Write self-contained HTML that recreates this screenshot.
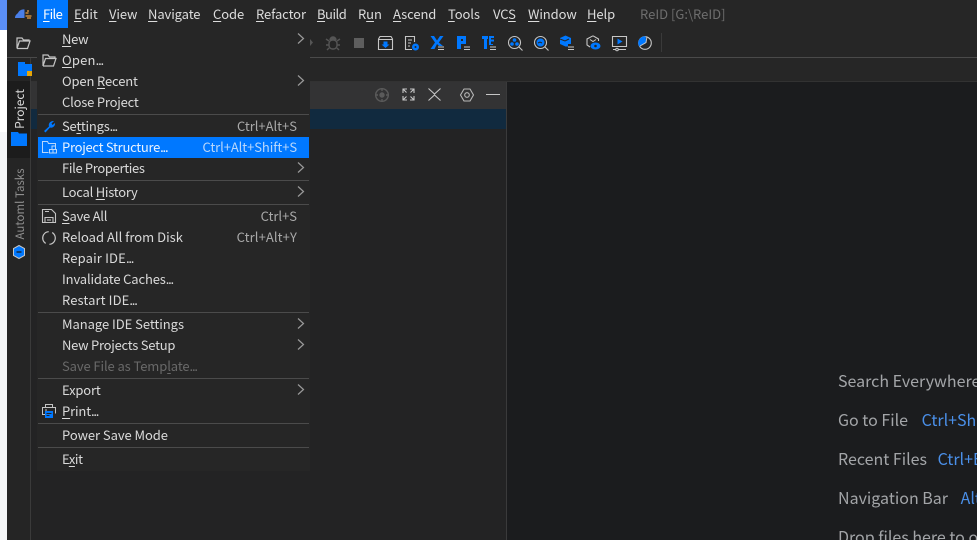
<!DOCTYPE html>
<html><head><meta charset="utf-8">
<style>
html,body{margin:0;padding:0;width:977px;height:540px;overflow:hidden;background:#232324}
body{position:relative;font-family:"Noto Sans CJK SC","Liberation Sans",sans-serif;font-size:13px;color:#d6d6d6}
.a{position:absolute}
.t{position:absolute;white-space:nowrap;line-height:18px;height:18px}
u{text-decoration-thickness:1px;text-underline-offset:2px}
.m{top:5px;color:#dcdcdc;letter-spacing:-.1px}
.i{left:62px;color:#dadada;letter-spacing:0}
.d{letter-spacing:-1.2px}
.s{right:680px;color:#a9a9a9;letter-spacing:-.02px}
.sep{position:absolute;left:38px;width:271px;height:1px;background:#4b4b4b}
.arr{position:absolute;left:296px;width:9px;height:12px}
svg{position:absolute;overflow:visible}
.hw{position:absolute;left:507px;top:360px;width:470px;height:180px;overflow:hidden}
.h{position:absolute;left:331px;white-space:nowrap;font-size:16px;color:#a3a5a8;line-height:22px}
.h b{font-weight:400;color:#4a8fe8}
</style></head><body>
<!-- left strip -->
<div class="a" style="left:0;top:0;width:7px;height:30px;background:#5b8ff7"></div>
<div class="a" style="left:0;top:30px;width:7px;height:102px;background:#fff"></div>
<div class="a" style="left:0;top:132px;width:7px;height:408px;background:#f5f6f8"></div>
<!-- top bars -->
<div class="a" style="left:7px;top:0;width:970px;height:82px;background:#262626"></div>
<div class="a" style="left:7px;top:57px;width:970px;height:1px;background:#4a4a4a"></div>
<div class="a" style="left:7px;top:81px;width:970px;height:1px;background:#323232"></div>
<!-- tool strip -->
<div class="a" style="left:7px;top:58px;width:23px;height:482px;background:#252525"></div>
<div class="a" style="left:7px;top:81px;width:23px;height:77px;background:#1c1c1c"></div>
<div class="a" style="left:30px;top:58px;width:1px;height:482px;background:#3a3a3a"></div>
<!-- project panel -->
<div class="a" style="left:31px;top:82px;width:475px;height:458px;background:#232324"></div>
<div class="a" style="left:31px;top:82px;width:475px;height:27px;background:#333334"></div>
<div class="a" style="left:31px;top:109px;width:475px;height:20px;background:#112a3f"></div>
<div class="a" style="left:506px;top:82px;width:1px;height:458px;background:#3a3a3b"></div>
<div class="a" style="left:507px;top:82px;width:470px;height:458px;background:#1b1c1e"></div>
<!-- logo -->
<svg style="left:15px;top:9px" width="17" height="10" viewBox="0 0 17 10"><path d="M0 9 C0 6 2 5 3 4 C4 1.500 7 0 9.500 .5 V9Z" fill="#4a7fe8"/><path d="M10.500 4h3M10.500 7h6M12 2h2M12 9h4" stroke="#c98a3c" stroke-width="1.500" fill="none"/></svg>
<!-- menu bar -->
<div class="a" style="left:37px;top:0;width:31px;height:28px;background:#0078ff"></div>
<span class="t m" style="left:43px;color:#fff;letter-spacing:-.6px"><u>F</u>ile</span>
<span class="t m" style="left:74px"><u>E</u>dit</span>
<span class="t m" style="left:109px"><u>V</u>iew</span>
<span class="t m" style="left:148px"><u>N</u>avigate</span>
<span class="t m" style="left:213px"><u>C</u>ode</span>
<span class="t m" style="left:256px"><u>R</u>efactor</span>
<span class="t m" style="left:317px;letter-spacing:-.5px"><u>B</u>uild</span>
<span class="t m" style="left:358px">R<u>u</u>n</span>
<span class="t m" style="left:393px"><u>A</u>scend</span>
<span class="t m" style="left:448px"><u>T</u>ools</span>
<span class="t m" style="left:493px">VC<u>S</u></span>
<span class="t m" style="left:528px"><u>W</u>indow</span>
<span class="t m" style="left:587px"><u>H</u>elp</span>
<span class="t" style="left:640px;top:5px;color:#6e6e6e;font-size:13px">ReID [G:\ReID]</span>
<!-- toolbar icons -->
<svg style="left:16px;top:36px" width="15" height="14" viewBox="0 0 15 14" fill="none" stroke="#c4c4c4" stroke-width="1.200"><path d="M1 12.500V2h5l1.500 2H13v1M1 12.500h10.500L14 5H3.500L1 12.500"/></svg>
<svg style="left:18px;top:62px" width="15" height="15" viewBox="0 0 15 15"><path d="M0 0h7v2h7v12H0Z" fill="#0078ff"/><rect x="9" y="9" width="5" height="5" fill="#e5a50a"/></svg>
<svg style="left:326px;top:35px" width="14" height="16" viewBox="0 0 14 16" fill="none" stroke="#555" stroke-width="1.400"><path d="M4 5a3 3 0 0 1 6 0" fill="#555"/><rect x="3" y="5" width="8" height="9" rx="3.500"/><path d="M0 4l3 2M14 4l-3 2M0 10h3M14 10h-3M1 15l2-2M13 15l-2-2"/></svg>
<div class="a" style="left:354px;top:38px;width:10px;height:10px;background:#5e5e5e"></div>
<svg style="left:310px;top:39px" width="4" height="7"><path d="M0 0l3 3.500L0 7Z" fill="#555"/></svg>
<svg style="left:378px;top:36px" width="15" height="14" viewBox="0 0 15 14" fill="none" stroke="#c6c6c6" stroke-width="1.100"><path d="M.5 13.500V3L2 .5h11L14.500 3v10.500ZM.5 3.500h14"/><path d="M5.500 5.500h4V8.500h2L7.500 12 3.500 8.500h2Z" fill="#0078ff" stroke="none"/></svg>
<svg style="left:405px;top:36px" width="14" height="15" viewBox="0 0 14 15" fill="none" stroke="#c6c6c6" stroke-width="1.100"><path d="M7 13.500H.5V.5h9V6M3 4h4M3 7h3M3 10h2"/><circle cx="10.500" cy="11" r="3.500" fill="#0078ff" stroke="none"/><circle cx="10.500" cy="11" r="1" fill="#262626" stroke="none"/></svg>
<svg style="left:430px;top:35px" width="15" height="16" viewBox="0 0 15 16" fill="none"><path d="M.5 1h3.500l3 4.500L10 1h3.500L8.800 7.500 13 11H9L7 9 4.500 14H.5l4.500-6.500Z" fill="#0078ff"/><path d="M8 12h6M14 14.500H8" stroke="#c6c6c6"/></svg>
<svg style="left:456px;top:35px" width="15" height="16" viewBox="0 0 15 16" fill="none"><path d="M1 1h9v8H5v5H1ZM5 4v2h2V4Z" fill="#0078ff" fill-rule="evenodd"/><path d="M8 12h6M14 14.500H8" stroke="#c6c6c6"/></svg>
<svg style="left:482px;top:35px" width="15" height="16" viewBox="0 0 15 16" fill="none"><path d="M0 1h6v3H5v10H2V4H0ZM7 1h5v2H9v1.500h3v2H9V9h2v1H7Z" fill="#0078ff"/><path d="M8 12h6M14 14.500H8" stroke="#c6c6c6"/></svg>
<svg style="left:508px;top:36px" width="15" height="15" viewBox="0 0 15 15" fill="none"><circle cx="6.500" cy="6.500" r="6" stroke="#c6c6c6" stroke-width="1.100"/><path d="M11 11l3.500 3.500" stroke="#c6c6c6" stroke-width="1.100"/><circle cx="6.500" cy="4" r="1.800" fill="#0078ff"/><circle cx="4" cy="8" r="1.800" fill="#0078ff"/><circle cx="9" cy="8" r="1.800" fill="#0078ff"/></svg>
<svg style="left:534px;top:36px" width="15" height="15" viewBox="0 0 15 15" fill="none"><circle cx="6.500" cy="6.500" r="6" stroke="#c6c6c6" stroke-width="1.100"/><path d="M11 11l3.500 3.500" stroke="#c6c6c6" stroke-width="1.100"/><circle cx="6.500" cy="6.500" r="4" fill="#0078ff"/><path d="M4 7l2-1 2 1" stroke="#262626"/></svg>
<svg style="left:560px;top:35px" width="15" height="16" viewBox="0 0 15 16" fill="none"><path d="M5.500.5L11 3v6H8v2.500H5.500L0 9V3Z" fill="#0078ff"/><path d="M0 4l5 2 4-2" stroke="#262626"/><path d="M8 12h6M14 14.500H8" stroke="#c6c6c6"/></svg>
<svg style="left:586px;top:35px" width="15" height="16" viewBox="0 0 15 16" fill="none"><path d="M7 .8L1 4v6l3 2M7 .8L12.500 4v2" stroke="#c6c6c6" stroke-width="1.100"/><path d="M4 4.500l3 2 3-2" stroke="#c6c6c6"/><ellipse cx="9.500" cy="11" rx="5" ry="3.500" fill="#0078ff"/><circle cx="9.500" cy="11" r="1.300" fill="#262626"/></svg>
<svg style="left:612px;top:36px" width="15" height="15" viewBox="0 0 15 15" fill="none"><path d="M.5.500h14v10H.5Z" stroke="#c6c6c6" stroke-width="1.100"/><path d="M5.500 2.500l5 3-5 3Z" fill="#0078ff"/><path d="M1 13.500h13" stroke="#c6c6c6"/><circle cx="5" cy="13.500" r="1.300" fill="#262626" stroke="#c6c6c6"/></svg>
<svg style="left:638px;top:36px" width="14" height="14" viewBox="0 0 14 14" fill="none"><circle cx="7" cy="7" r="6.300" stroke="#c6c6c6" stroke-width="1.100"/><path d="M7 .7A6.300 6.300 0 0 0 1.500 10L8 6.500Z" fill="#0078ff" stroke="#0078ff"/><path d="M9 .7L8 6.500l-6 3.500" stroke="#c6c6c6"/></svg>
<div class="a" style="left:661px;top:33px;width:1px;height:19px;background:#3a3a3a"></div>
<!-- panel header icons -->
<svg style="left:375px;top:88px" width="14" height="14" viewBox="0 0 14 14" fill="none" stroke="#5a5a5a" stroke-width="1.400"><circle cx="7" cy="7" r="6.300"/><circle cx="7" cy="7" r="2" fill="#5a5a5a"/><path d="M7 0v3M7 11v3M0 7h3M11 7h3"/></svg>
<svg style="left:402px;top:88px" width="13" height="13" viewBox="0 0 13 13" fill="none" stroke="#c6c6c6" stroke-width="1.100"><path d="M1 5V1h4M1 1l3.500 3.500M8 1h4v4M12 1L8.500 4.500M1 8v4h4M1 12l3.500-3.500M12 8v4H8M12 12L8.500 8.500"/></svg>
<svg style="left:428px;top:88px" width="13" height="13" viewBox="0 0 13 13" fill="none" stroke="#c6c6c6" stroke-width="1.100"><path d="M.5.500L6.500 6 12.500.5M.5 12.500L6.500 7l6 5.500"/></svg>
<svg style="left:460px;top:88px" width="14" height="14" viewBox="0 0 14 14" fill="none" stroke="#b8b8b8" stroke-width="1.100"><path d="M4 1h6l3.500 6L10 13H4L.5 7Z" stroke-linejoin="round"/><circle cx="7" cy="7" r="2.300"/></svg>
<div class="a" style="left:486px;top:94px;width:14px;height:1px;background:#c6c6c6"></div>
<!-- vertical tabs -->
<span class="t" style="left:20px;top:100px;color:#dadada;font-size:12px;transform:translate(-50%,0) rotate(-90deg);transform-origin:center;line-height:18px">Project</span>
<svg style="left:11px;top:132px" width="16" height="14" viewBox="0 0 16 14"><path d="M0 0h7l1 1.500h8V14H0Z" fill="#0078ff"/></svg>
<span class="t" style="left:20px;top:195px;color:#8f8f8f;font-size:11.500px;transform:translate(-50%,0) rotate(-90deg);transform-origin:center">Automl Tasks</span>
<svg style="left:13px;top:245px" width="12" height="14" viewBox="0 0 12 14"><path d="M6 .5L11.500 3.500v7L6 13.500.5 10.500v-7Z" fill="#0078ff" stroke="#c6c6c6"/><path d="M3.500 7h5" stroke="#123" stroke-width="1.400"/></svg>
<!-- menu -->
<div class="a" style="left:37px;top:28px;width:273px;height:443px;background:#262626"></div>
<div class="a" style="left:38px;top:137px;width:271px;height:21px;background:#0078ff"></div>
<div class="sep" style="top:114px"></div><div class="sep" style="top:180px"></div>
<div class="sep" style="top:204px"></div><div class="sep" style="top:312px"></div>
<div class="sep" style="top:378px"></div><div class="sep" style="top:423px"></div>
<div class="sep" style="top:447px"></div>
<span class="t i" style="top:30px;letter-spacing:-.3px"><u>N</u>ew</span>
<span class="t i" style="top:51px;letter-spacing:.2px"><u>O</u>pen<span class="d">...</span></span>
<span class="t i" style="top:72px;letter-spacing:-.15px">Open <u>R</u>ecent</span>
<span class="t i" style="top:93px;letter-spacing:-.2px">Close Project</span>
<span class="t i" style="top:117px;letter-spacing:-.2px">Se<u>t</u>tings<span class="d">...</span></span><span class="t s" style="top:117px">Ctrl+Alt+S</span>
<span class="t i" style="top:138px;color:#e8f2ff;letter-spacing:-.27px">Project Structure<span class="d">...</span></span><span class="t s" style="top:138px;color:#b9d7fb;letter-spacing:-.08px">Ctrl+Alt+Shift+S</span>
<span class="t i" style="top:159px;letter-spacing:-.33px">File Properties</span>
<span class="t i" style="top:183px;letter-spacing:-.25px">Local <u>H</u>istory</span>
<span class="t i" style="top:207px;letter-spacing:-.25px"><u>S</u>ave All</span><span class="t s" style="top:207px">Ctrl+S</span>
<span class="t i" style="top:228px">Reload All from Disk</span><span class="t s" style="top:228px;letter-spacing:.1px">Ctrl+Alt+Y</span>
<span class="t i" style="top:249px;letter-spacing:.15px">Repair IDE<span class="d">...</span></span>
<span class="t i" style="top:270px;letter-spacing:-.15px">Invalidate Caches<span class="d">...</span></span>
<span class="t i" style="top:291px;letter-spacing:.1px">Restart IDE<span class="d">...</span></span>
<span class="t i" style="top:315px;letter-spacing:-.05px">Manage IDE Settings</span>
<span class="t i" style="top:336px;letter-spacing:-.25px">New Projects Setup</span>
<span class="t i" style="top:357px;color:#696969;letter-spacing:-.1px">Save File as Temp<u>l</u>ate<span class="d">...</span></span>
<span class="t i" style="top:381px;letter-spacing:-.15px">Export</span>
<span class="t i" style="top:402px;letter-spacing:-.15px"><u>P</u>rint<span class="d">...</span></span>
<span class="t i" style="top:426px;letter-spacing:-.06px">Power Save Mode</span>
<span class="t i" style="top:450px;letter-spacing:-.4px">E<u>x</u>it</span>
<!-- arrows -->
<svg class="arr" style="top:33px" viewBox="0 0 9 12" fill="none" stroke="#9a9a9a" stroke-width="1.200"><path d="M2 .5L7.500 5.500 2 10.500"/></svg>
<svg class="arr" style="top:75px" viewBox="0 0 9 12" fill="none" stroke="#9a9a9a" stroke-width="1.200"><path d="M2 .5L7.500 5.500 2 10.500"/></svg>
<svg class="arr" style="top:162px" viewBox="0 0 9 12" fill="none" stroke="#9a9a9a" stroke-width="1.200"><path d="M2 .5L7.500 5.500 2 10.500"/></svg>
<svg class="arr" style="top:186px" viewBox="0 0 9 12" fill="none" stroke="#9a9a9a" stroke-width="1.200"><path d="M2 .5L7.500 5.500 2 10.500"/></svg>
<svg class="arr" style="top:318px" viewBox="0 0 9 12" fill="none" stroke="#9a9a9a" stroke-width="1.200"><path d="M2 .5L7.500 5.500 2 10.500"/></svg>
<svg class="arr" style="top:339px" viewBox="0 0 9 12" fill="none" stroke="#9a9a9a" stroke-width="1.200"><path d="M2 .5L7.500 5.500 2 10.500"/></svg>
<svg class="arr" style="top:384px" viewBox="0 0 9 12" fill="none" stroke="#9a9a9a" stroke-width="1.200"><path d="M2 .5L7.500 5.500 2 10.500"/></svg>
<!-- menu icons -->
<svg style="left:42px;top:54px" width="15" height="13" viewBox="0 0 15 13" fill="none" stroke="#c4c4c4" stroke-width="1.200"><path d="M1 12V1h5l1.500 2H13v1.500M1 12h10.500L14 4.500H3.500L1 12"/></svg>
<svg style="left:43px;top:120px" width="13" height="13" viewBox="0 0 13 13"><path d="M1 11L6 6.500C5 3.500 7.500.5 11 1L8.500 3.500 9.500 5 12 3C12.500 6 9.500 8.500 7 7.500L2.500 12.500Z" fill="#0078ff"/></svg>
<svg style="left:42px;top:141px" width="15" height="13" viewBox="0 0 15 13" fill="none" stroke="#b9d7fb" stroke-width="1"><path d="M6.500 11.500H.5V.5h5l1 2h7v3"/><rect x="10" y="5" width="3.500" height="3.500"/><rect x="7.500" y="8.500" width="3.500" height="3.500"/><rect x="11" y="8.500" width="3.500" height="3.500"/></svg>
<svg style="left:42px;top:209px" width="14" height="14" viewBox="0 0 14 14" fill="none" stroke="#c4c4c4" stroke-width="1.100"><path d="M.5.500h9l4 4v9H.5ZM3 13.500V8.500h8v5M3 2.500h4"/><path d="M5 11h4"/></svg>
<svg style="left:42px;top:231px" width="14" height="14" viewBox="0 0 14 14" fill="none" stroke="#c4c4c4" stroke-width="1.200"><circle cx="7" cy="7" r="6.300" stroke-dasharray="16 3.800" transform="rotate(-60 7 7)"/></svg>
<svg style="left:42px;top:404px" width="15" height="15" viewBox="0 0 15 15" fill="none" stroke="#c4c4c4" stroke-width="1"><path d="M3.500 3.500V.5h7v3M3 10.500H.5v-7h13v6M3 6h2"/><rect x="3" y="7" width="8" height="7" fill="#0078ff" stroke="none"/><path d="M4.500 9.500h5M4.500 11.500h3" stroke="#252525"/></svg>
<!-- hints -->
<div class="hw">
<div class="h" style="top:9px">Search Everywhere</div>
<div class="h" style="top:48px">Go to File <b style="margin-left:10px">Ctrl+Shift+N</b></div>
<div class="h" style="top:87px">Recent Files <b style="margin-left:7px">Ctrl+E</b></div>
<div class="h" style="top:126px">Navigation Bar <b style="margin-left:9px">Alt+Home</b></div>
<div class="h" style="top:165px">Drop files here to open</div>
</div>
</body></html>
